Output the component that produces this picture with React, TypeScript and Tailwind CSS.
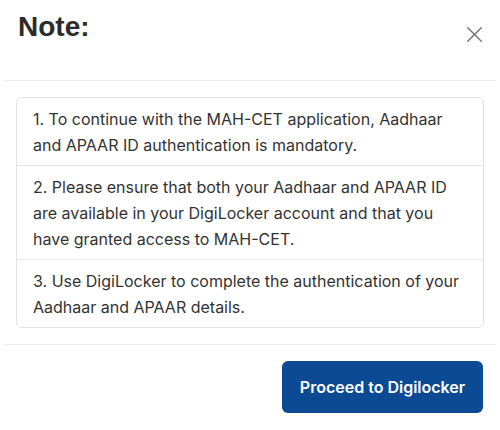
import { X } from 'lucide-react';

const notes = [
  '1. To continue with the MAH-CET application, Aadhaar and APAAR ID authentication is mandatory.',
  '2. Please ensure that both your Aadhaar and APAAR ID are available in your DigiLocker account and that you have granted access to MAH-CET.',
  '3. Use DigiLocker to complete the authentication of your Aadhaar and APAAR details.',
];

export default function App() {
  return (
    <div className="w-[500px] h-[430px] bg-white px-1 font-['Inter',sans-serif]">
      {/* Header */}
      <div className="flex justify-between items-start h-[80px] pl-[14px] pr-[8px] pt-[10px]">
        <h2 className="font-['Liberation_Sans',Arial,sans-serif] font-bold text-[28px] leading-[34px] text-[#2b2b2b]">
          Note:
        </h2>
        <button className="mt-[11px] text-[#777]">
          <X size={27} strokeWidth={1.3} />
        </button>
      </div>
      <div className="h-px bg-[#ececec]" />

      {/* Body */}
      <div className="px-3 pt-[16px] pb-[16px]">
        <div className="rounded-md border border-[#e3e3e3] text-[16px] leading-[26px] text-[#333]">
          {notes.map((n, i) => (
            <div key={i} className={`px-4 py-[7.5px] ${i > 0 ? 'border-t border-[#e6e6e6]' : ''}`}>
              {n}
            </div>
          ))}
        </div>
      </div>
      <div className="h-px bg-[#ececec]" />

      {/* Footer */}
      <div className="flex justify-end pt-[16px] pr-[13px]">
        <button className="w-[201px] h-[52px] rounded-md bg-[#0d4a94] text-white text-[16px] font-semibold">
          Proceed to Digilocker
        </button>
      </div>
    </div>
  );
}
